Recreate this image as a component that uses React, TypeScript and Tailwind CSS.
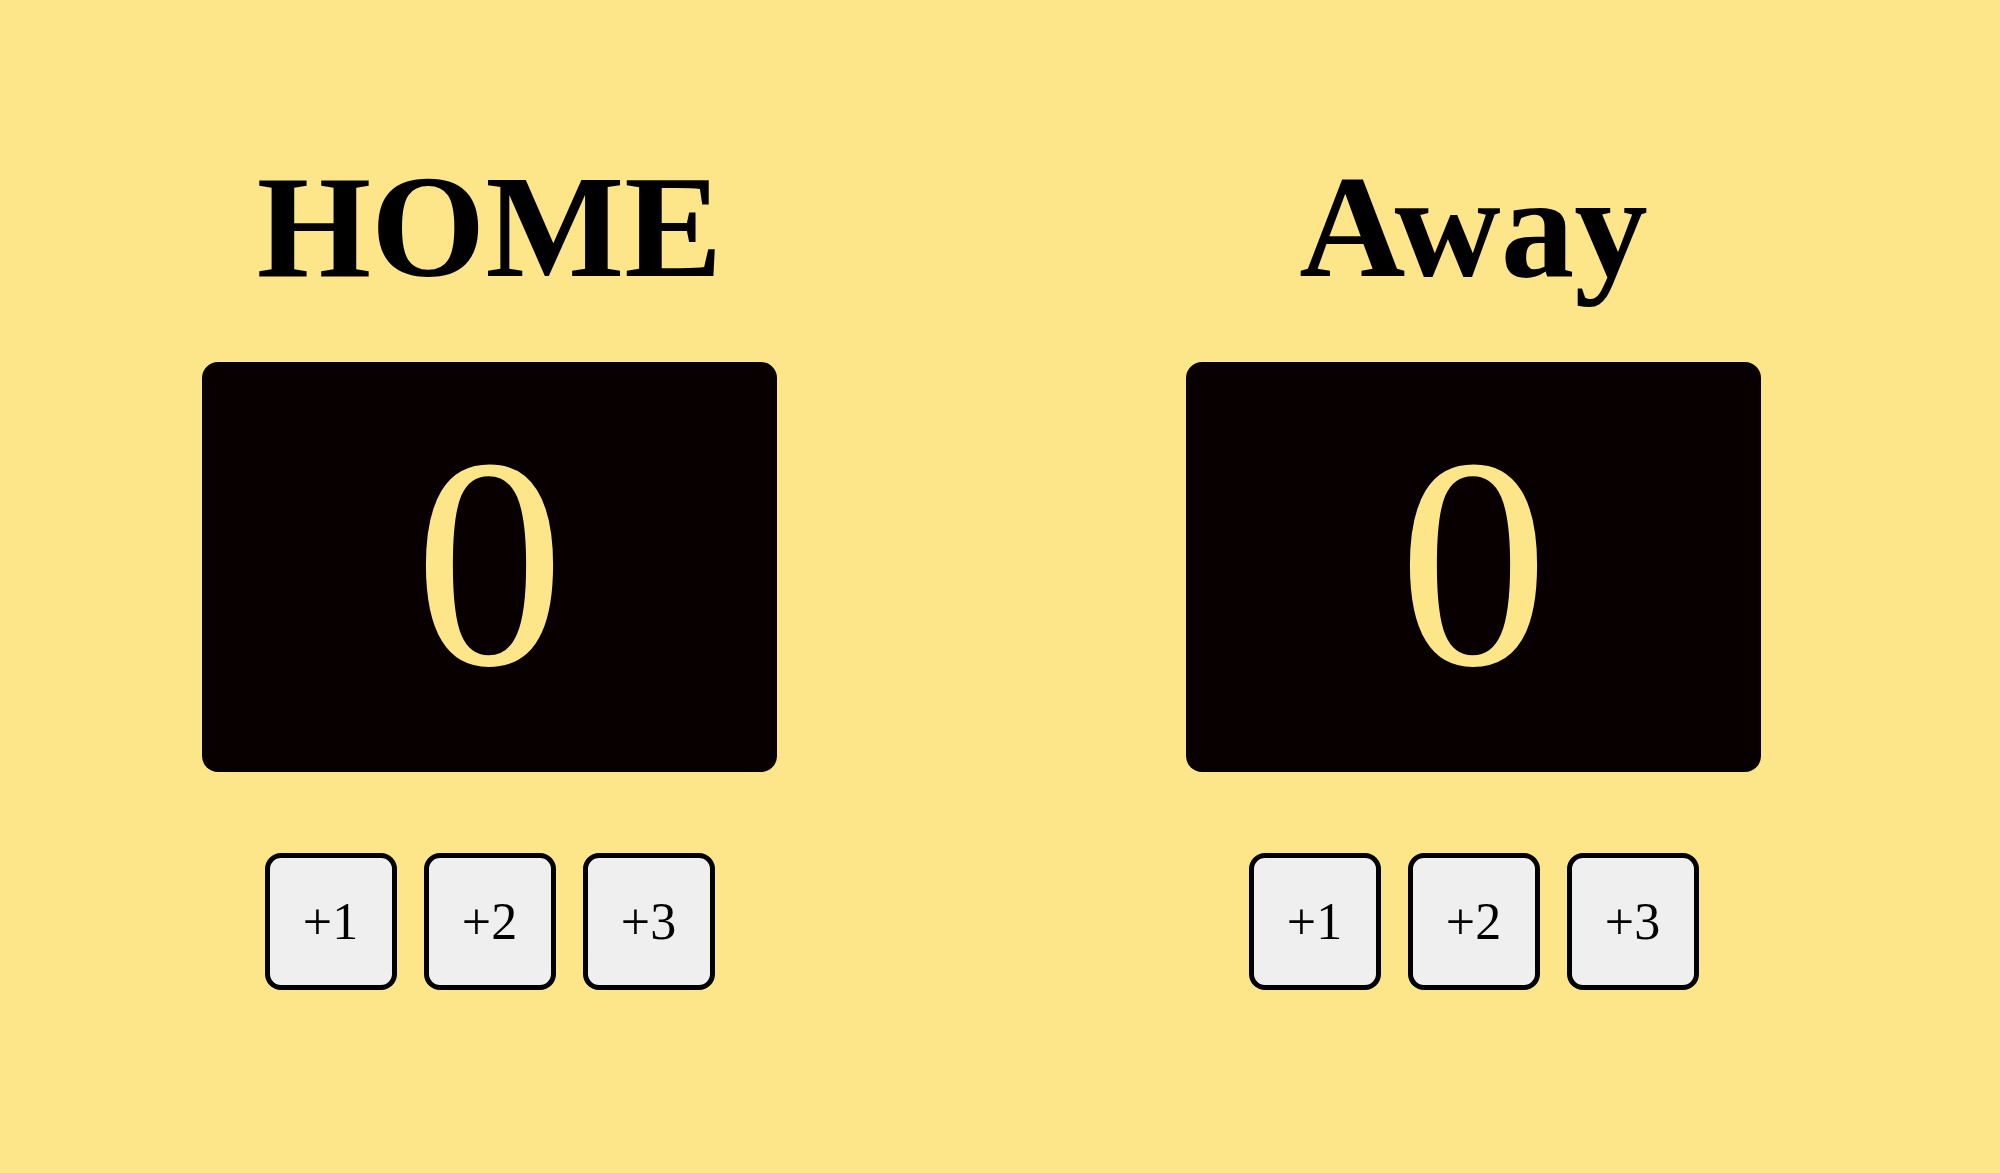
import { useState } from "react";

const POINTS = [1, 2, 3];

function Team({ name }: { name: string }) {
  const [score, setScore] = useState(0);

  return (
    <section className="flex w-[575px] max-w-full flex-col items-center">
      <h1 className="text-[147px] leading-[164px] font-bold text-black">{name}</h1>
      <output
        aria-label={`${name} score`}
        className="mt-[53px] flex w-full items-center justify-center rounded-2xl bg-[#080000] pt-9 pb-11 text-[300px] leading-[330px] text-[#fde68a]"
      >
        {score}
      </output>
      <div className="mt-[81px] flex gap-[27px]">
        {POINTS.map((points) => (
          <button
            key={points}
            type="button"
            onClick={() => setScore(score + points)}
            className="h-[137px] w-[132px] rounded-2xl border-[5px] border-black bg-[#efefef] pt-px text-[52px] leading-[60px] text-black"
          >
            +{points}
          </button>
        ))}
      </div>
    </section>
  );
}

export default function App() {
  return (
    <main className="flex min-h-screen flex-wrap content-start justify-center gap-x-[409px] gap-y-20 bg-[#fde68a] pt-[145px] pr-[37px] font-['Liberation_Serif','Times_New_Roman',serif]">
      <Team name="HOME" />
      <Team name="Away" />
    </main>
  );
}
